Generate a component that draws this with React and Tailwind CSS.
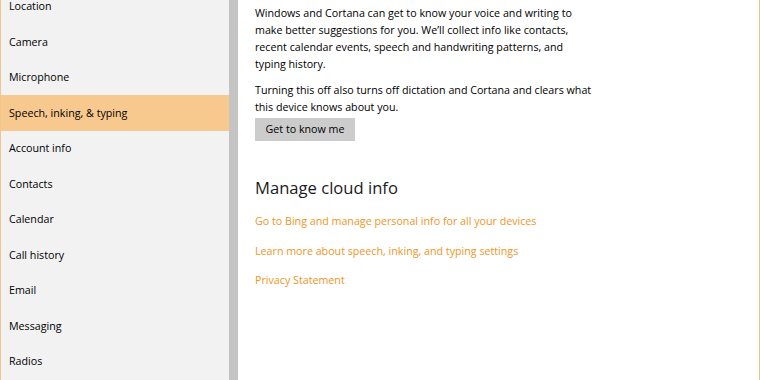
export default function App() {
  const items = [
    "Location",
    "Camera",
    "Microphone",
    "Speech, inking, & typing",
    "Account info",
    "Contacts",
    "Calendar",
    "Call history",
    "Email",
    "Messaging",
    "Radios",
  ];
  return (
    <div
      className="w-[760px] h-[380px] overflow-hidden flex bg-white text-black"
      style={{ fontFamily: '"Open Sans", "Noto Sans", sans-serif' }}
    >
      <div className="w-[1px] bg-[#f3c58c]" />
      <div className="w-[228px] bg-[#f2f2f2] flex flex-col">
        <div className="-mt-[11.5px] flex flex-col">
          {items.map((t, i) => (
            <div
              key={t}
              className={
                "h-[35.5px] flex items-center pl-[8px] text-[10.7px] " +
                (i === 3 ? "bg-[#f8c98f]" : "")
              }
            >
              {t}
            </div>
          ))}
        </div>
      </div>
      <div className="w-[9px] bg-[#c4c4c4]" />
      <div className="flex-1 pl-[17px] pt-[5px] text-[10.7px] leading-[17px]">
        <p className="w-[360px]">
          Windows and Cortana can get to know your voice and writing to
          <br />
          make better suggestions for you. We’ll collect info like contacts,
          <br />
          recent calendar events, speech and handwriting patterns, and
          <br />
          typing history.
        </p>
        <p className="w-[360px] mt-[9px]">
          Turning this off also turns off dictation and Cortana and clears what
          <br />
          this device knows about you.
        </p>
        <button className="mt-[2px] w-[100px] h-[23px] bg-[#cccccc] text-[10.7px] flex items-center justify-center">
          Get to know me
        </button>
        <div className="mt-[34px] text-[16.6px] leading-[26px] text-[#1a1a1a]">
          Manage cloud info
        </div>
        <div className="mt-[12px] flex flex-col gap-[12.5px] text-[#f0951e]">
          <div>Go to Bing and manage personal info for all your devices</div>
          <div>Learn more about speech, inking, and typing settings</div>
          <div>Privacy Statement</div>
        </div>
      </div>
      <div className="w-[1px] bg-[#e8c57e]" />
    </div>
  );
}
